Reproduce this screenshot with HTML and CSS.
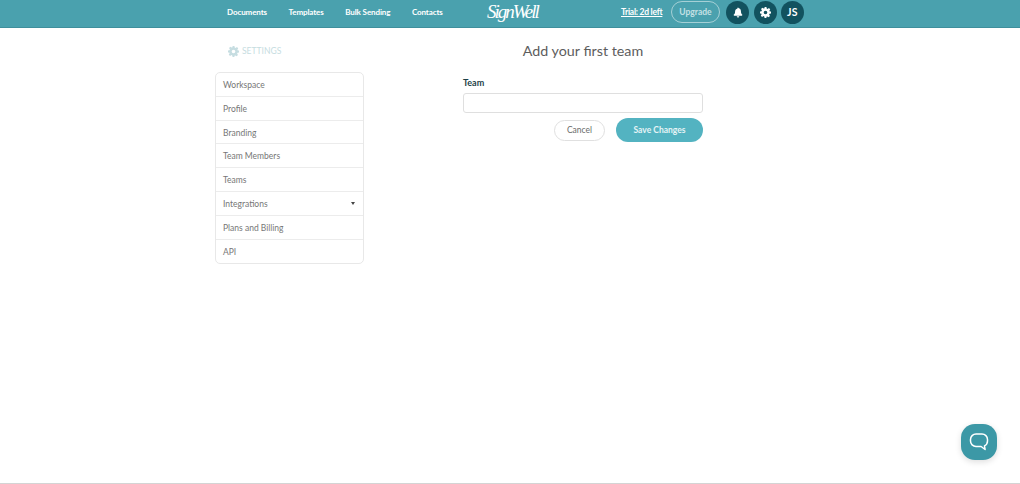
FILE: index.html
```html
<!DOCTYPE html>
<html lang="en">
<head>
    <meta charset="UTF-8">
    <title>SignWell - Add your first team</title>
    <link rel="stylesheet" href="styles.css">
</head>
<body>
    <div class="page">
        <header class="topbar">
            <nav class="nav-links">
                <a href="#">Documents</a>
                <a href="#">Templates</a>
                <a href="#">Bulk Sending</a>
                <a href="#">Contacts</a>
            </nav>
            <span class="logo">SignWell</span>
            <div class="nav-right">
                <a class="trial" href="#">Trial: 2d left</a>
                <a class="upgrade" href="#">Upgrade</a>
                <span class="round-btn">
                    <svg width="10" height="11" viewBox="0 0 24 24"><path fill="#fff" d="M12 24a3 3 0 0 0 3-3H9a3 3 0 0 0 3 3zm10-7c-1-1-3-2.600-3-8.500 0-3.600-2.500-6.500-5.700-7.200V1.500a1.300 1.300 0 0 0-2.600 0v.8C7.500 3 5 5.900 5 9.500 5 15.400 3 16 2 17c-.8.900-.2 2.500 1 2.500h18c1.200 0 1.800-1.600 1-2.500z"/></svg>
                </span>
                <span class="round-btn">
                    <svg width="11" height="11" viewBox="0 0 24 24"><use href="#gear"/></svg>
                </span>
                <span class="round-btn initials">JS</span>
            </div>
        </header>

        <div class="content">
            <aside class="sidebar">
                <div class="settings-title">
                    <svg width="11" height="11" viewBox="0 0 24 24">
                        <path id="gear" fill="currentColor" fill-rule="evenodd" d="M10 0h4l.7 3.300 1.900.8 2.900-1.800 2.800 2.800-1.800 2.900.8 1.900L24 10v4l-3.300.7-.8 1.900 1.800 2.900-2.800 2.800-2.900-1.800-1.900.8L14 24h-4l-.7-3.300-1.900-.8-2.900 1.800-2.800-2.800 1.800-2.900-.8-1.900L0 14v-4l3.300-.7.8-1.900-1.800-2.900 2.800-2.800 2.900 1.800 1.900-.8zM12 8a4 4 0 1 0 0 8 4 4 0 0 0 0-8z"/>
                    </svg>
                    <span>SETTINGS</span>
                </div>
                <ul class="side-menu">
                    <li>Workspace</li>
                    <li>Profile</li>
                    <li>Branding</li>
                    <li>Team Members</li>
                    <li>Teams</li>
                    <li class="has-caret">Integrations <span class="caret"></span></li>
                    <li>Plans and Billing</li>
                    <li>API</li>
                </ul>
            </aside>

            <main class="main">
                <h1>Add your first team</h1>
                <label class="field-label" for="team">Team</label>
                <input class="text-input" type="text" id="team">
                <div class="actions">
                    <button class="btn-cancel">Cancel</button>
                    <button class="btn-save">Save Changes</button>
                </div>
            </main>
        </div>

        <button class="chat-btn" aria-label="Chat">
            <svg width="20" height="20" viewBox="0 0 20 20"><path fill="none" stroke="#fff" stroke-width="1.500" stroke-linejoin="round" d="M7 2h6a5.500 5.500 0 0 1 5.500 5.500V9a5.500 5.500 0 0 1-3 4.900l.6 3.600-4-3H7A5.500 5.500 0 0 1 1.500 9V7.500A5.500 5.500 0 0 1 7 2z"/></svg>
        </button>
    </div>
</body>
</html>
```

FILE: styles.css
```css
* { box-sizing: border-box; }
html, body { height: 100%; }
body {
    margin: 0;
    font-family: 'Lato', sans-serif;
    background: #fff;
    color: #6b6b6b;
}
a { text-decoration: none; color: inherit; }
.page {
    position: relative;
    height: 484px;
    border-bottom: 1px solid #d4d4d4;
    overflow: hidden;
}
.topbar {
    height: 28px;
    background: #4aa1ae;
    border-bottom: 1px solid #3f8f9c;
    display: flex;
    align-items: center;
    padding: 0 0 3px 227px;
    color: #fff;
}
.nav-links {
    display: flex;
    gap: 21.500px;
    width: 260px;
    font-size: 8px;
    font-weight: 700;
    letter-spacing: -0.1px;
    white-space: nowrap;
}
.logo {
    font-family: 'Liberation Serif', serif;
    font-style: italic;
    font-size: 19px;
    width: 134px;
    margin-top: -1px;
    letter-spacing: -2px;
}
.nav-right {
    display: flex;
    align-items: center;
}
.trial {
    width: 41px;
    font-size: 8.500px;
    font-weight: 700;
    letter-spacing: -0.25px;
    white-space: nowrap;
    text-decoration: underline;
    margin-right: 9px;
}
.upgrade {
    width: 49px;
    height: 22px;
    line-height: 20px;
    border: 1px solid #a5d0d6;
    border-radius: 11px;
    font-size: 8.500px;
    font-weight: 700;
    color: #c4e0e4;
    text-align: center;
    margin-right: 6px;
}
.round-btn {
    width: 23px;
    height: 23px;
    border-radius: 50%;
    background: #12525f;
    color: #fff;
    display: flex;
    align-items: center;
    justify-content: center;
    margin-right: 4.500px;
}
.initials {
    font-size: 10.500px;
    font-weight: 700;
    letter-spacing: 0.3px;
}
.content {
    display: flex;
    padding-left: 215px;
}
.sidebar { width: 148.500px; }
.settings-title {
    height: 44px;
    padding: 17.500px 0 0 13px;
    display: flex;
    align-items: flex-start;
    gap: 3px;
    font-size: 8.500px;
    line-height: 11px;
    color: #c6dde1;
}
.side-menu {
    list-style: none;
    margin: 0;
    padding: 0;
    border: 1px solid #e8e8e8;
    border-radius: 5px;
    font-size: 8.500px;
    color: #767676;
}
.side-menu li {
    height: 23.800px;
    line-height: 24px;
    padding-left: 7px;
    border-bottom: 1px solid #ececec;
    position: relative;
}
.side-menu li:last-child { border-bottom: 0; }
.has-caret .caret {
    position: absolute;
    right: 7.500px;
    top: 10px;
    border: 2.500px solid transparent;
    border-top: 3px solid #444;
    border-bottom: 0;
}
.main {
    width: 240px;
    margin-left: 99.500px;
    display: flex;
    flex-direction: column;
}
h1 {
    margin: 14px 0 0;
    height: 32px;
    font-size: 14.300px;
    font-weight: 400;
    text-align: center;
    color: #5d5d5d;
    white-space: nowrap;
}
.field-label {
    font-size: 9px;
    font-weight: 700;
    color: #1d3f47;
    height: 15px;
    margin-top: 3px;
}
.text-input {
    height: 20px;
    border: 1px solid #dfdfdf;
    border-radius: 3px;
    margin-top: 1px;
    outline: none;
}
.actions {
    display: flex;
    justify-content: flex-end;
    align-items: center;
    gap: 11px;
    margin-top: 5px;
}
.btn-cancel {
    width: 51px;
    height: 21px;
    border: 1px solid #e0e0e0;
    border-radius: 11px;
    background: #fff;
    font: 400 8.500px 'Lato', sans-serif;
    color: #6b6b6b;
    padding: 0;
}
.btn-save {
    width: 87px;
    height: 24px;
    border: 0;
    border-radius: 12px;
    background: #53b3c1;
    font: 700 8.500px 'Lato', sans-serif;
    color: #e6f4f6;
    padding: 0;
}
.chat-btn {
    position: absolute;
    left: 961px;
    top: 424px;
    width: 36px;
    height: 36px;
    border: 0;
    padding: 0;
    border-radius: 14px;
    background: #3c98a6;
    box-shadow: 0 2px 6px #0002;
    display: flex;
    align-items: center;
    justify-content: center;
}
```
